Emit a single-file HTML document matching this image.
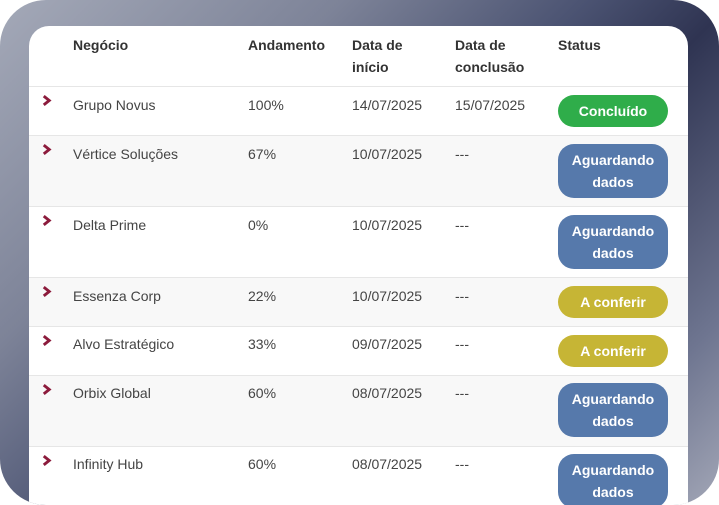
<!DOCTYPE html>
<html style="width:719px;height:505px;overflow:hidden"><head><meta charset="utf-8"><style>
*{margin:0;padding:0;box-sizing:border-box}
html,body{width:719px;height:505px;overflow:hidden}
body{background:#fff;position:relative;font-family:"Liberation Sans",sans-serif;}
.frame{position:absolute;left:0;top:0;width:719px;height:505px;border-radius:46px;background:linear-gradient(135deg,#a4a9b8 0%,#7d8398 28%,#4b5372 48%,#2f3452 60%,#6e7590 85%,#a2a6b6 100%);overflow:hidden}
.card{position:absolute;left:29px;top:26px;width:659px;height:479px;background:#fff;border-radius:20px 20px 0 0;overflow:hidden}
.row{position:absolute;left:0;width:659px;border-top:1.5px solid #e6e6e6}
.g{background:#f8f8f8}
.t{position:absolute;font-size:14px;color:#444;line-height:22px}
.h{font-weight:bold;color:#333}
.chev{position:absolute;left:12px;width:11px;height:11px}
.b{position:absolute;left:529px;width:110px;border-radius:16px;color:#fff;font-weight:bold;font-size:14px;text-align:center;line-height:22px;padding:5px 0}
.gr{background:#2fad4a}.bl{background:#5679ab}.ol{background:#c6b535}
</style></head><body>
<div class="frame">
<div class="card">
<div class="t h" style="left:44px;top:8px">Negócio</div>
<div class="t h" style="left:219px;top:8px">Andamento</div>
<div class="t h" style="left:323px;top:8px">Data de<br>início</div>
<div class="t h" style="left:426px;top:8px">Data de<br>conclusão</div>
<div class="t h" style="left:529px;top:8px">Status</div>
<div class="row" style="top:60px;height:49px"></div>
<div class="row g" style="top:109px;height:71px"></div>
<div class="row" style="top:180px;height:71px"></div>
<div class="row g" style="top:251px;height:49px"></div>
<div class="row" style="top:300px;height:49px"></div>
<div class="row g" style="top:349px;height:71px"></div>
<div class="row" style="top:420px;height:59px"></div>

<svg class="chev" style="top:69px" viewBox="0 0 10 10"><path d="M2.5 1 L7.5 5 L2.5 9" fill="none" stroke="#8c1b3c" stroke-width="2.6"/></svg>
<div class="t" style="left:44px;top:68px">Grupo Novus</div>
<div class="t" style="left:219px;top:68px">100%</div>
<div class="t" style="left:323px;top:68px">14/07/2025</div>
<div class="t" style="left:426px;top:68px">15/07/2025</div>
<div class="b gr" style="top:69px">Concluído</div>
<svg class="chev" style="top:118px" viewBox="0 0 10 10"><path d="M2.5 1 L7.5 5 L2.5 9" fill="none" stroke="#8c1b3c" stroke-width="2.6"/></svg>
<div class="t" style="left:44px;top:117px">Vértice Soluções</div>
<div class="t" style="left:219px;top:117px">67%</div>
<div class="t" style="left:323px;top:117px">10/07/2025</div>
<div class="t" style="left:426px;top:117px">---</div>
<div class="b bl" style="top:118px">Aguardando<br>dados</div>
<svg class="chev" style="top:189px" viewBox="0 0 10 10"><path d="M2.5 1 L7.5 5 L2.5 9" fill="none" stroke="#8c1b3c" stroke-width="2.6"/></svg>
<div class="t" style="left:44px;top:188px">Delta Prime</div>
<div class="t" style="left:219px;top:188px">0%</div>
<div class="t" style="left:323px;top:188px">10/07/2025</div>
<div class="t" style="left:426px;top:188px">---</div>
<div class="b bl" style="top:189px">Aguardando<br>dados</div>
<svg class="chev" style="top:260px" viewBox="0 0 10 10"><path d="M2.5 1 L7.5 5 L2.5 9" fill="none" stroke="#8c1b3c" stroke-width="2.6"/></svg>
<div class="t" style="left:44px;top:259px">Essenza Corp</div>
<div class="t" style="left:219px;top:259px">22%</div>
<div class="t" style="left:323px;top:259px">10/07/2025</div>
<div class="t" style="left:426px;top:259px">---</div>
<div class="b ol" style="top:260px">A conferir</div>
<svg class="chev" style="top:309px" viewBox="0 0 10 10"><path d="M2.5 1 L7.5 5 L2.5 9" fill="none" stroke="#8c1b3c" stroke-width="2.6"/></svg>
<div class="t" style="left:44px;top:307px">Alvo Estratégico</div>
<div class="t" style="left:219px;top:307px">33%</div>
<div class="t" style="left:323px;top:307px">09/07/2025</div>
<div class="t" style="left:426px;top:307px">---</div>
<div class="b ol" style="top:309px">A conferir</div>
<svg class="chev" style="top:358px" viewBox="0 0 10 10"><path d="M2.5 1 L7.5 5 L2.5 9" fill="none" stroke="#8c1b3c" stroke-width="2.6"/></svg>
<div class="t" style="left:44px;top:356px">Orbix Global</div>
<div class="t" style="left:219px;top:356px">60%</div>
<div class="t" style="left:323px;top:356px">08/07/2025</div>
<div class="t" style="left:426px;top:356px">---</div>
<div class="b bl" style="top:357px">Aguardando<br>dados</div>
<svg class="chev" style="top:429px" viewBox="0 0 10 10"><path d="M2.5 1 L7.5 5 L2.5 9" fill="none" stroke="#8c1b3c" stroke-width="2.6"/></svg>
<div class="t" style="left:44px;top:427px">Infinity Hub</div>
<div class="t" style="left:219px;top:427px">60%</div>
<div class="t" style="left:323px;top:427px">08/07/2025</div>
<div class="t" style="left:426px;top:427px">---</div>
<div class="b bl" style="top:428px">Aguardando<br>dados</div>
</div>
</div>
</body></html>
